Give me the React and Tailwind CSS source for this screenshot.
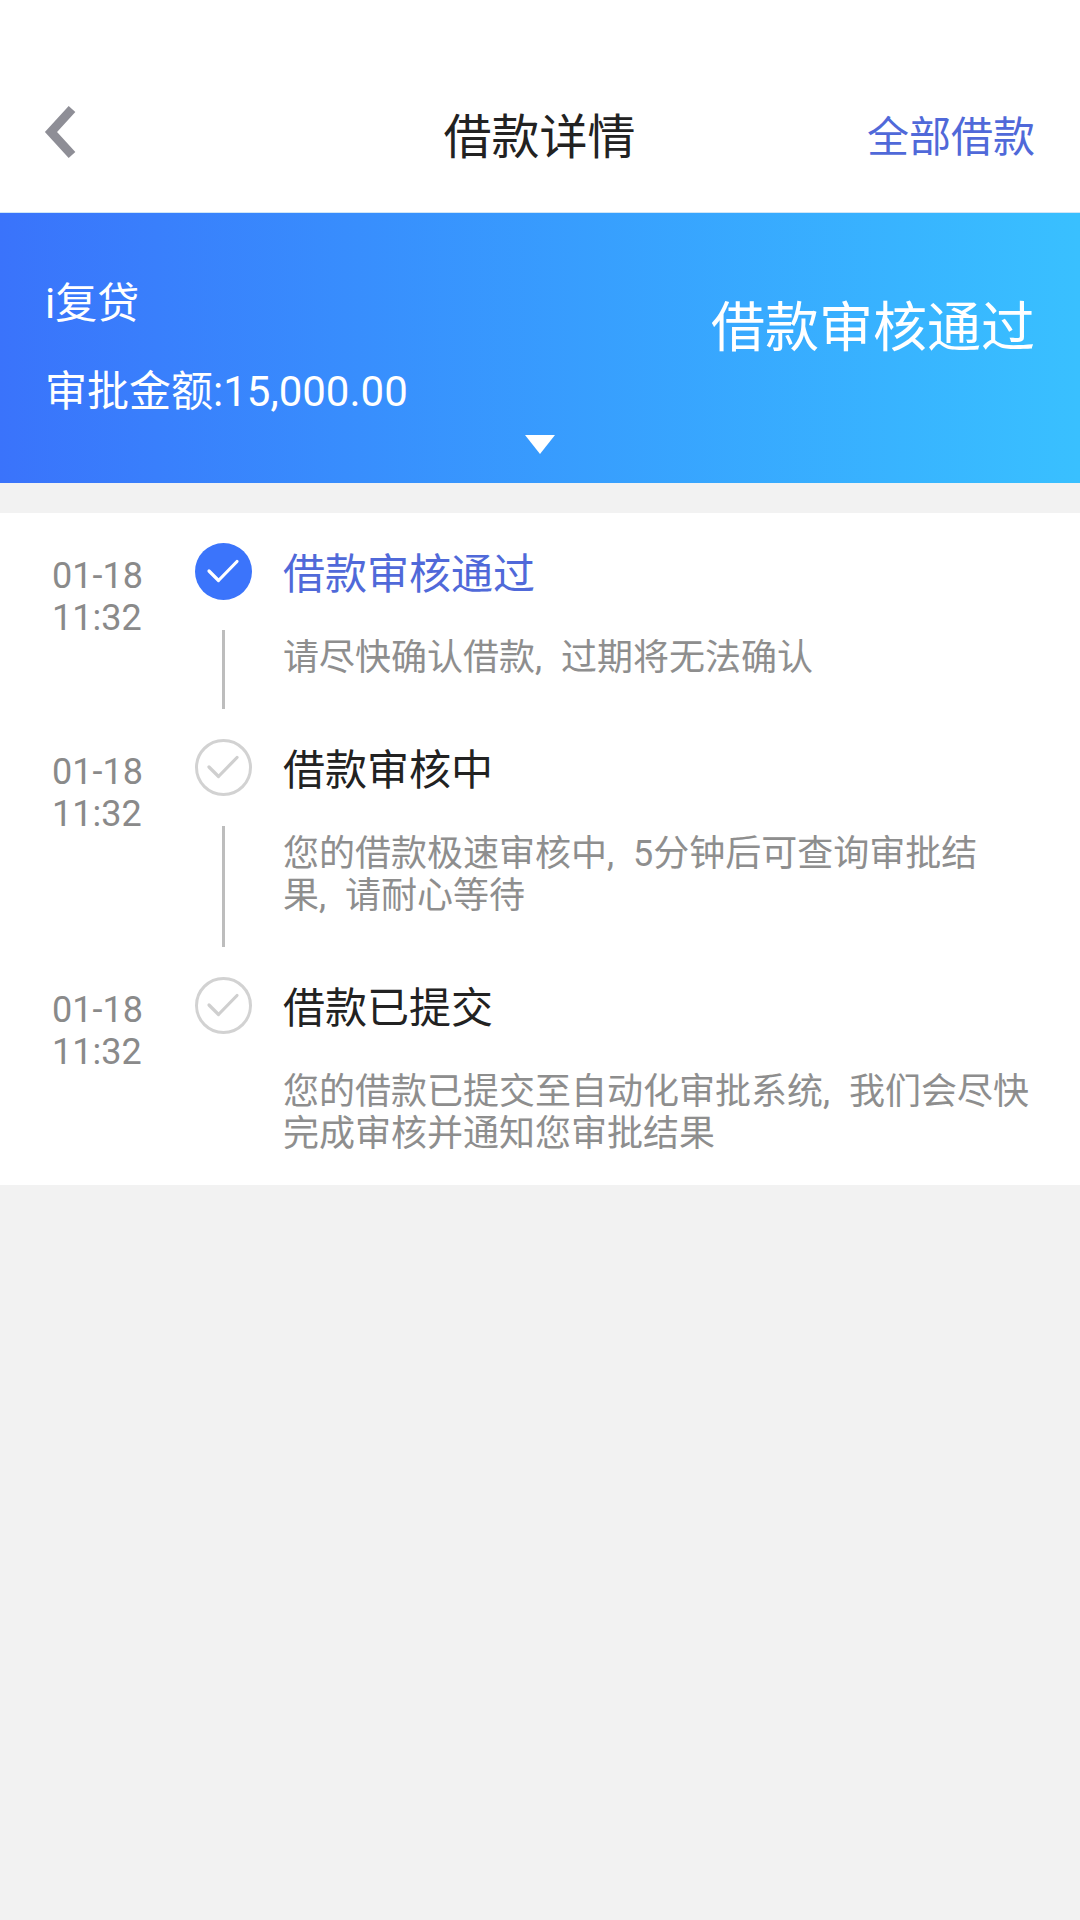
const font = { fontFamily: '"Roboto", "Noto Sans CJK SC", sans-serif' };

function Check({ active }) {
  return active ? (
    <svg width="57" height="57" viewBox="0 0 57 57" className="block shrink-0">
      <circle cx="28.5" cy="28.5" r="28.5" fill="#3b74fb" />
      <path d="M14 28 L23.5 37.5 L42 18.5" fill="none" stroke="#fff" strokeWidth="3.2" strokeLinecap="round" strokeLinejoin="round" />
    </svg>
  ) : (
    <svg width="57" height="57" viewBox="0 0 57 57" className="block shrink-0">
      <circle cx="28.5" cy="28.5" r="27" fill="#fff" stroke="#d2d2d2" strokeWidth="3" />
      <path d="M14 28 L23.5 37.5 L42 18.5" fill="none" stroke="#cfcfcf" strokeWidth="3.2" strokeLinecap="round" strokeLinejoin="round" />
    </svg>
  );
}

const items = [
  { title: "借款审核通过", active: true, desc: ["请尽快确认借款, 过期将无法确认"], line: true },
  { title: "借款审核中", desc: ["您的借款极速审核中, 5分钟后可查询审批结", "果, 请耐心等待"], line: true },
  { title: "借款已提交", desc: ["您的借款已提交至自动化审批系统, 我们会尽快", "完成审核并通知您审批结果"] },
];

function Item({ title, active, desc, line }) {
  return (
    <div className="flex pt-[30px]">
      <div className="w-[195px] shrink-0 pl-[52px] pt-[12px] text-[36px] leading-[42px] text-[#8a8a8a]">
        <div>01-18</div>
        <div>11:32</div>
      </div>
      <div className="flex w-[57px] shrink-0 flex-col items-center">
        <Check active={active} />
        {line && <div className="mt-[30px] w-[3px] flex-1 bg-[#bdbdbd]" />}
      </div>
      <div className="ml-[31px] min-w-0 flex-1 pr-[40px]">
        <div className={`h-[60px] text-[42px] leading-[64px] ${active ? "text-[#5069d9]" : "text-[#222222]"}`}>{title}</div>
        <div className="mt-[34px] pb-[30px] text-[36px] leading-[42px] text-[#8e8e8e] whitespace-nowrap [word-spacing:10px]">
          {desc.map((d) => (
            <div key={d}>{d}</div>
          ))}
        </div>
      </div>
    </div>
  );
}

export default function App() {
  return (
    <div style={font} className="flex min-h-[1920px] w-[1080px] flex-col bg-[#f2f2f2]">
      <header className="flex h-[212px] items-center justify-between bg-white pl-[44px] pr-[45px] pt-[64px]">
        <div className="w-[168px] shrink-0 -translate-y-[6px]">
          <svg width="34" height="54" viewBox="0 0 34 54" className="block">
            <path d="M28 4 L7 27 L28 50" fill="none" stroke="#8e8e96" strokeWidth="9" />
          </svg>
        </div>
        <div className="text-[48px] leading-[60px] text-[#222222]">借款详情</div>
        <div className="w-[168px] whitespace-nowrap text-right text-[42px] leading-[60px] text-[#5069d9]">全部借款</div>
      </header>
      <section className="relative flex h-[271px] items-start justify-between border-t border-[#cfe6f7] bg-linear-to-r from-[#3a73fb] to-[#39c0ff] pl-[45px] pr-[45px] text-white">
        <div className="pt-[66px] text-[42px] leading-[50px]">
          <div>i复贷</div>
          <div className="mt-[38px]">审批金额:15,000.00</div>
        </div>
        <div className="pt-[84px] text-[54px] leading-[64px]">借款审核通过</div>
        <svg width="30" height="19" viewBox="0 0 30 19" className="absolute bottom-[29px] left-[525px]">
          <path d="M0 0 H30 L15 19 Z" fill="#fff" />
        </svg>
      </section>
      <section className="mt-[30px] bg-white">
        {items.map((it) => (
          <Item key={it.title} {...it} />
        ))}
      </section>
    </div>
  );
}
